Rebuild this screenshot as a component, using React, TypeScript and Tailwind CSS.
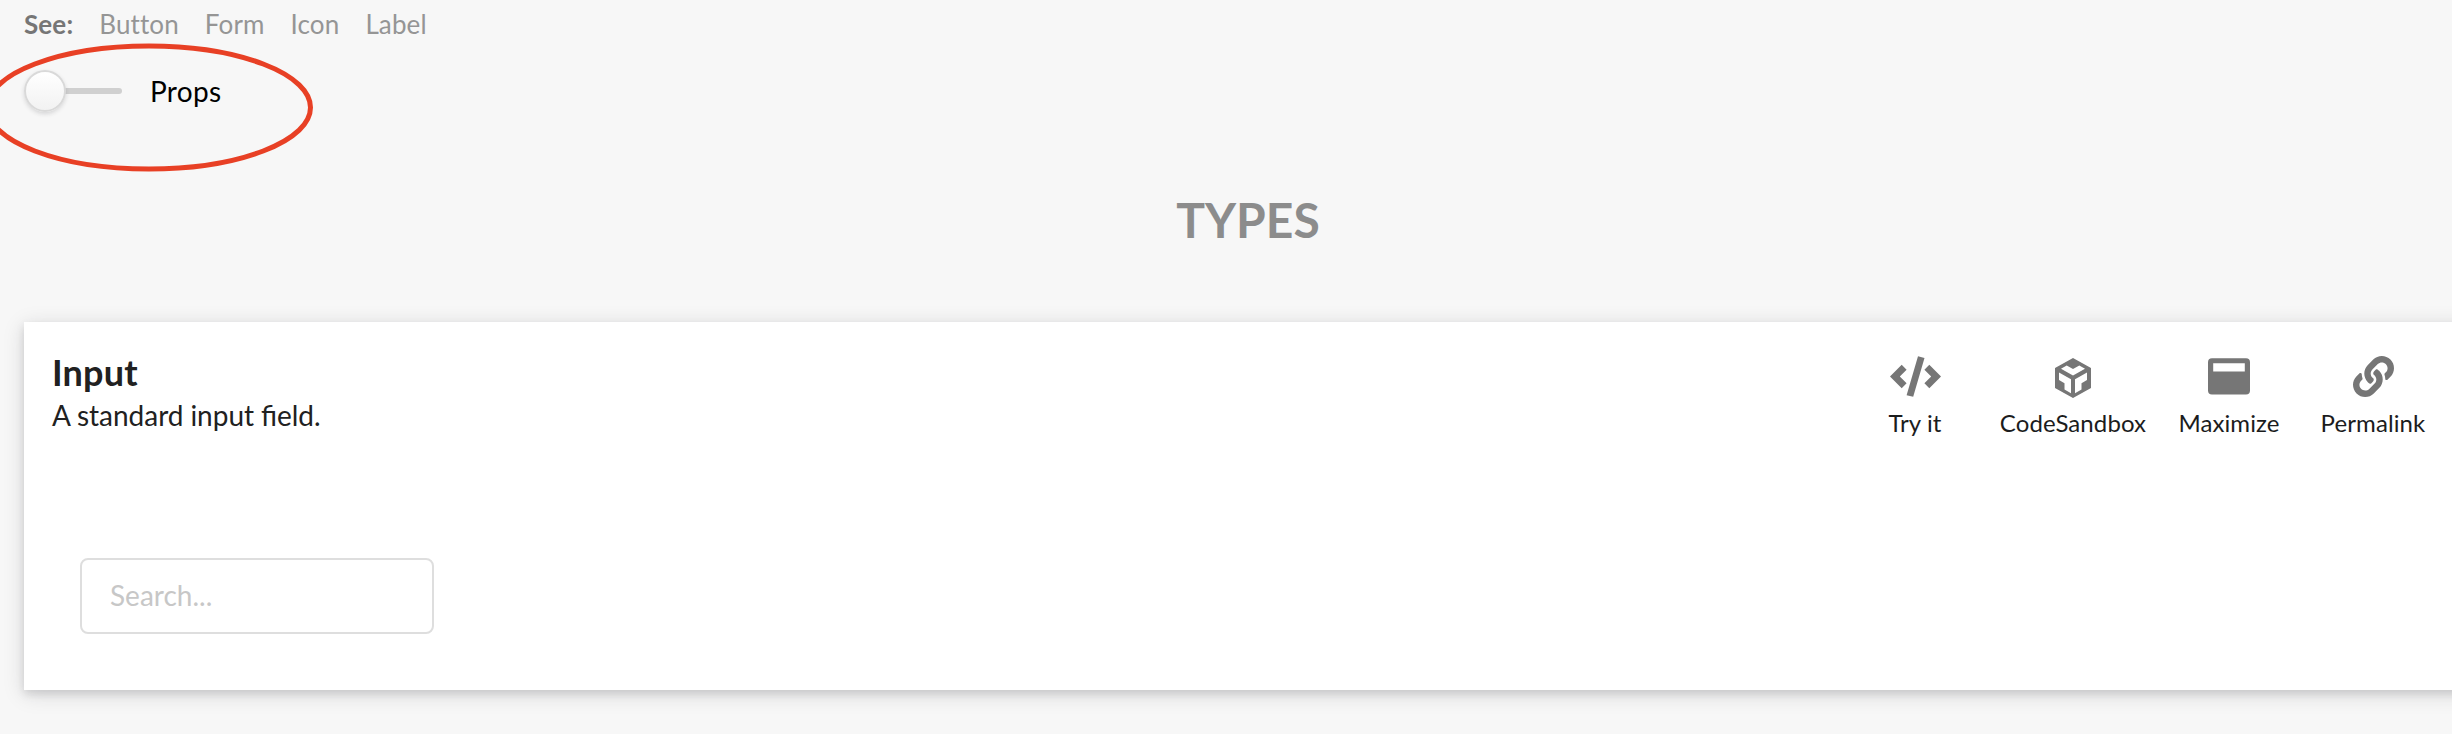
import { FaLink } from "react-icons/fa";
import type { ReactNode } from "react";

function CodeIcon() {
  return (
    <svg className="h-[41px] w-[51px]" viewBox="0 0 51 41" fill="currentColor">
      <path d="M0 20.5 11.7 8.8 16.6 13.7 9.8 20.5 16.6 27.3 11.7 32.2ZM51 20.5 39.3 8.8 34.4 13.7 41.2 20.5 34.4 27.3 39.3 32.2ZM28 0.2 34.5 1.9 23.2 40.8 16.6 39.2Z" />
    </svg>
  );
}

function SandboxIcon() {
  return (
    <svg className="mt-0.5 h-10 w-9" viewBox="0 0 36 40" fill="currentColor">
      <path
        fillRule="evenodd"
        d="M18 0 36 10v20L18 40 0 30V10ZM6 10.7 11.7 7.6 18 11 24.3 7.6 30 10.7 18 17.4ZM4 14.4 16 21.2V35.2L9.5 31.6V25.2L4 22.1ZM32 14.4 20 21.2V35.2L26.5 31.6V25.2L32 22.1Z"
      />
    </svg>
  );
}

function MaximizeIcon() {
  return (
    <svg className="mt-0.5 h-[37px] w-[42px]" viewBox="0 0 42 37" fill="currentColor">
      <path
        fillRule="evenodd"
        d="M4 .3H38a4 4 0 0 1 4 4V32.6a4 4 0 0 1-4 4H4a4 4 0 0 1-4-4V4.3a4 4 0 0 1 4-4ZM5.2 5.3V13.4H36.8V5.3Z"
      />
    </svg>
  );
}

function Action({ label, width, children }: { label: string; width: string; children: ReactNode }) {
  return (
    <button className={`flex flex-col items-center ${width}`}>
      <span className="flex h-[42px] items-start justify-center text-[#767676]">{children}</span>
      <span className="mt-2 text-[24px] leading-[34px] tracking-[0.1px] whitespace-nowrap text-[#1b1c1d]">{label}</span>
    </button>
  );
}

export default function App() {
  return (
    <main className="relative h-[734px] w-full overflow-hidden bg-[#f7f7f7] font-['Lato',sans-serif] text-[28px] text-[#212121]">
      <nav className="flex h-[50px] gap-[26px] pl-6 text-[26px] leading-[49px] tracking-[0.13px] text-[#959595]">
        <strong className="text-[#767676]">See:</strong>
        <a>Button</a>
        <a>Form</a>
        <a>Icon</a>
        <a>Label</a>
      </nav>

      <label className="mt-5 flex h-[42px] items-center pl-6">
        <span className="flex w-[98px] items-center">
          <span className="z-10 size-[42px] shrink-0 rounded-full border-2 border-[#d9d9d9] bg-linear-to-b from-white to-[#f2f2f2] shadow-[0_2px_4px_rgba(34,36,38,0.15)]" />
          <span className="-ml-2 h-[6px] grow rounded-r-[3px] bg-[#d0d0d0]" />
        </span>
        <span className="ml-7 tracking-[0.3px] text-black">Props</span>
      </label>

      <h2 className="mt-[78px] h-[60px] pl-11 text-center text-[48px] leading-[60px] font-bold text-[#8c8c8c]">TYPES</h2>

      <section className="mt-[72px] -mr-6 ml-6 h-[368px] bg-white px-7 pt-7 shadow-[0_4px_8px_rgba(34,36,38,0.12),0_4px_20px_rgba(34,36,38,0.15)]">
        <header className="flex h-[88px] justify-between">
          <div>
            <h3 className="text-[36px] leading-[45px] font-bold tracking-[0.2px]">Input</h3>
            <p className="leading-[40px] [word-spacing:-0.3px]">A standard input field.</p>
          </div>
          <div className="-mr-[10px] flex items-start pt-1.5">
            <Action label="Try it" width="w-[122px]"><CodeIcon /></Action>
            <Action label="CodeSandbox" width="w-[194px]"><SandboxIcon /></Action>
            <Action label="Maximize" width="w-[118px]"><MaximizeIcon /></Action>
            <Action label="Permalink" width="w-[170px]"><FaLink size={41} /></Action>
          </div>
        </header>
        <input
          className="mt-[120px] ml-7 block h-[76px] w-[354px] rounded-lg border-2 border-[#dedede] px-7 pb-0.5 outline-none placeholder:text-[#c7c7c7]"
          placeholder="Search..."
        />
      </section>

      <svg className="pointer-events-none absolute top-0 left-0 h-[190px] w-[330px]" viewBox="0 0 330 190" fill="none">
        <ellipse cx="149" cy="107.5" rx="161.5" ry="61.5" stroke="#e84025" strokeWidth="5" />
      </svg>
    </main>
  );
}
